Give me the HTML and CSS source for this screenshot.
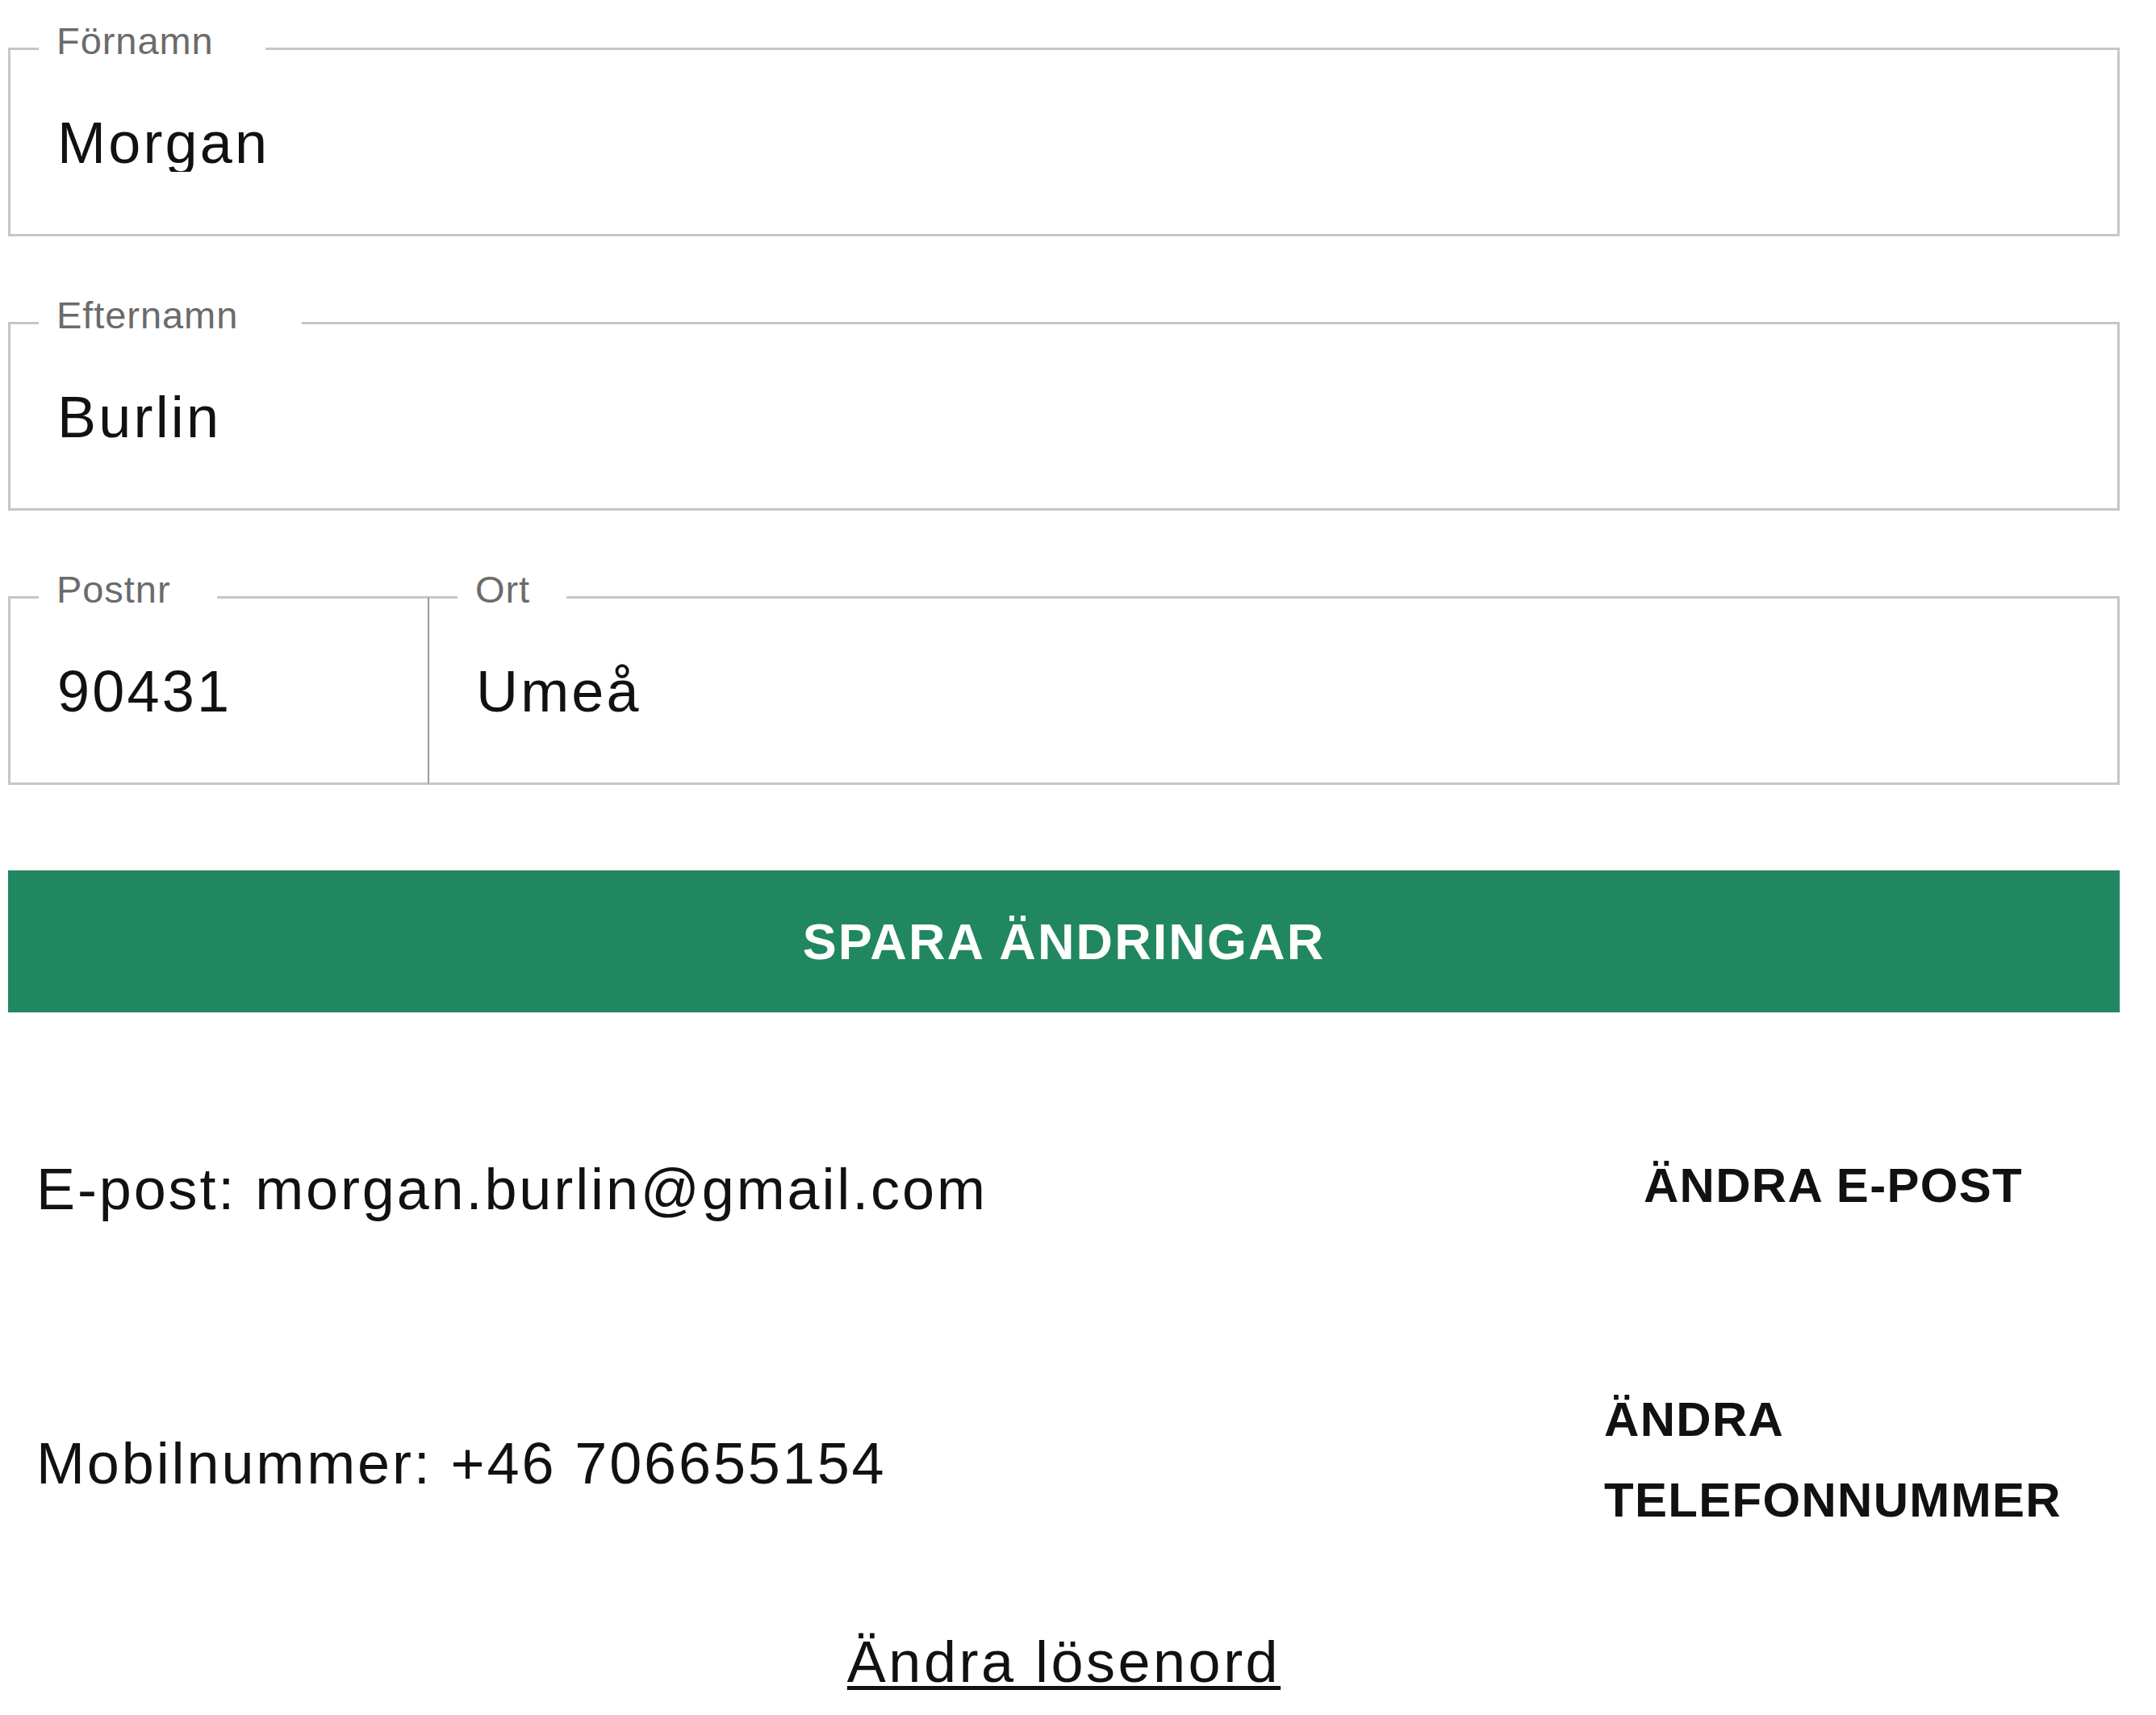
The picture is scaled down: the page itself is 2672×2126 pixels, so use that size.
FILE: index.html
```html
<!DOCTYPE html>
<html lang="sv">
<head>
<meta charset="utf-8">
<title>Mina uppgifter</title>
<link rel="stylesheet" href="styles.css">
</head>
<body>
<main class="page">
  <form class="profile-form">
    <fieldset class="field">
      <legend class="field-label notch-fornamn">Förnamn</legend>
      <input class="field-input" type="text" value="Morgan">
    </fieldset>
    <fieldset class="field">
      <legend class="field-label notch-efternamn">Efternamn</legend>
      <input class="field-input" type="text" value="Burlin">
    </fieldset>
    <div class="field-row">
      <fieldset class="field field--postnr">
        <legend class="field-label notch-postnr">Postnr</legend>
        <input class="field-input" type="text" value="90431">
      </fieldset>
      <fieldset class="field field--ort">
        <legend class="field-label notch-ort">Ort</legend>
        <input class="field-input" type="text" value="Umeå">
      </fieldset>
    </div>
    <button class="save-btn" type="button">SPARA ÄNDRINGAR</button>
  </form>

  <section class="contact">
    <div class="contact-row">
      <p class="contact-text">E-post: morgan.burlin@gmail.com</p>
      <div class="contact-actions">
        <button class="action-btn" type="button">ÄNDRA E-POST</button>
      </div>
    </div>
    <div class="contact-row">
      <p class="contact-text">Mobilnummer: +46 706655154</p>
      <div class="contact-actions">
        <button class="action-btn" type="button">ÄNDRA TELEFONNUMMER</button>
      </div>
    </div>
  </section>

  <div class="password">
    <a class="password-link" href="#">Ändra lösenord</a>
  </div>
</main>
</body>
</html>
```

FILE: styles.css
```css
html, body {
  margin: 0;
  padding: 0;
  background: #ffffff;
}

body {
  font-family: "Liberation Sans", Arial, sans-serif;
  color: #111111;
}

.page {
  width: 2617px;
  margin-left: 10px;
  padding-top: 27px;
}

.profile-form {
  display: flex;
  flex-direction: column;
  gap: 74px;
}

.field {
  margin: 0;
  min-width: 0;
  border: 3px solid #c6c6c6;
  padding: 47px 0 77px 35px;
}

.field-label {
  padding: 0 60px 20px 22px;
  font-size: 47px;
  line-height: 47px;
  letter-spacing: 0.02em;
  color: #6b6b6b;
}

.notch-fornamn { padding-right: 64px; }
.notch-efternamn { padding-right: 79px; }
.notch-postnr { padding-right: 58px; }
.notch-ort { padding-right: 45px; }

.field-input {
  display: block;
  width: 100%;
  box-sizing: border-box;
  height: 72px;
  padding: 0 0 0 23px;
  margin: 0;
  border: 0;
  outline: 0;
  background: transparent;
  font-family: "Liberation Sans", Arial, sans-serif;
  font-size: 72px;
  line-height: 72px;
  letter-spacing: 3.2px;
  color: #111111;
}

.field-row {
  display: grid;
  grid-template-columns: 520px 1fr;
}

.field--postnr {
  border-right: 0;
}

.field--ort {
  border-left: 2px solid #9a9a9a;
}

.save-btn {
  margin-top: 32px;
  width: 100%;
  height: 176px;
  border: 0;
  background: #218761;
  color: #ffffff;
  font-family: "Liberation Sans", Arial, sans-serif;
  font-weight: bold;
  font-size: 63px;
  letter-spacing: 2.1px;
  cursor: pointer;
}

.contact {
  margin-top: 99px;
  display: flex;
  flex-direction: column;
  gap: 100px;
}

.contact-row {
  min-height: 240px;
  display: flex;
  align-items: center;
  justify-content: space-between;
  padding: 0 35px 0 35px;
}

.contact-text {
  margin: 0;
  font-size: 72px;
  letter-spacing: 0.04em;
  color: #111111;
}

.contact-actions {
  width: 640px;
  flex-shrink: 0;
  display: flex;
  justify-content: center;
  margin-bottom: 8px;
}

.action-btn {
  min-width: 0;
  padding: 0 36px;
  border: 0;
  background: none;
  text-align: left;
  font-family: "Liberation Sans", Arial, sans-serif;
  font-weight: bold;
  font-size: 60px;
  line-height: 100px;
  letter-spacing: 1.3px;
  color: #111111;
  cursor: pointer;
}

.password {
  margin-top: 83px;
  text-align: center;
}

.password-link {
  font-size: 72px;
  line-height: 1.2;
  letter-spacing: 3.5px;
  color: #111111;
  text-decoration: underline;
  text-decoration-thickness: 5px;
  text-underline-offset: 5px;
}
```
